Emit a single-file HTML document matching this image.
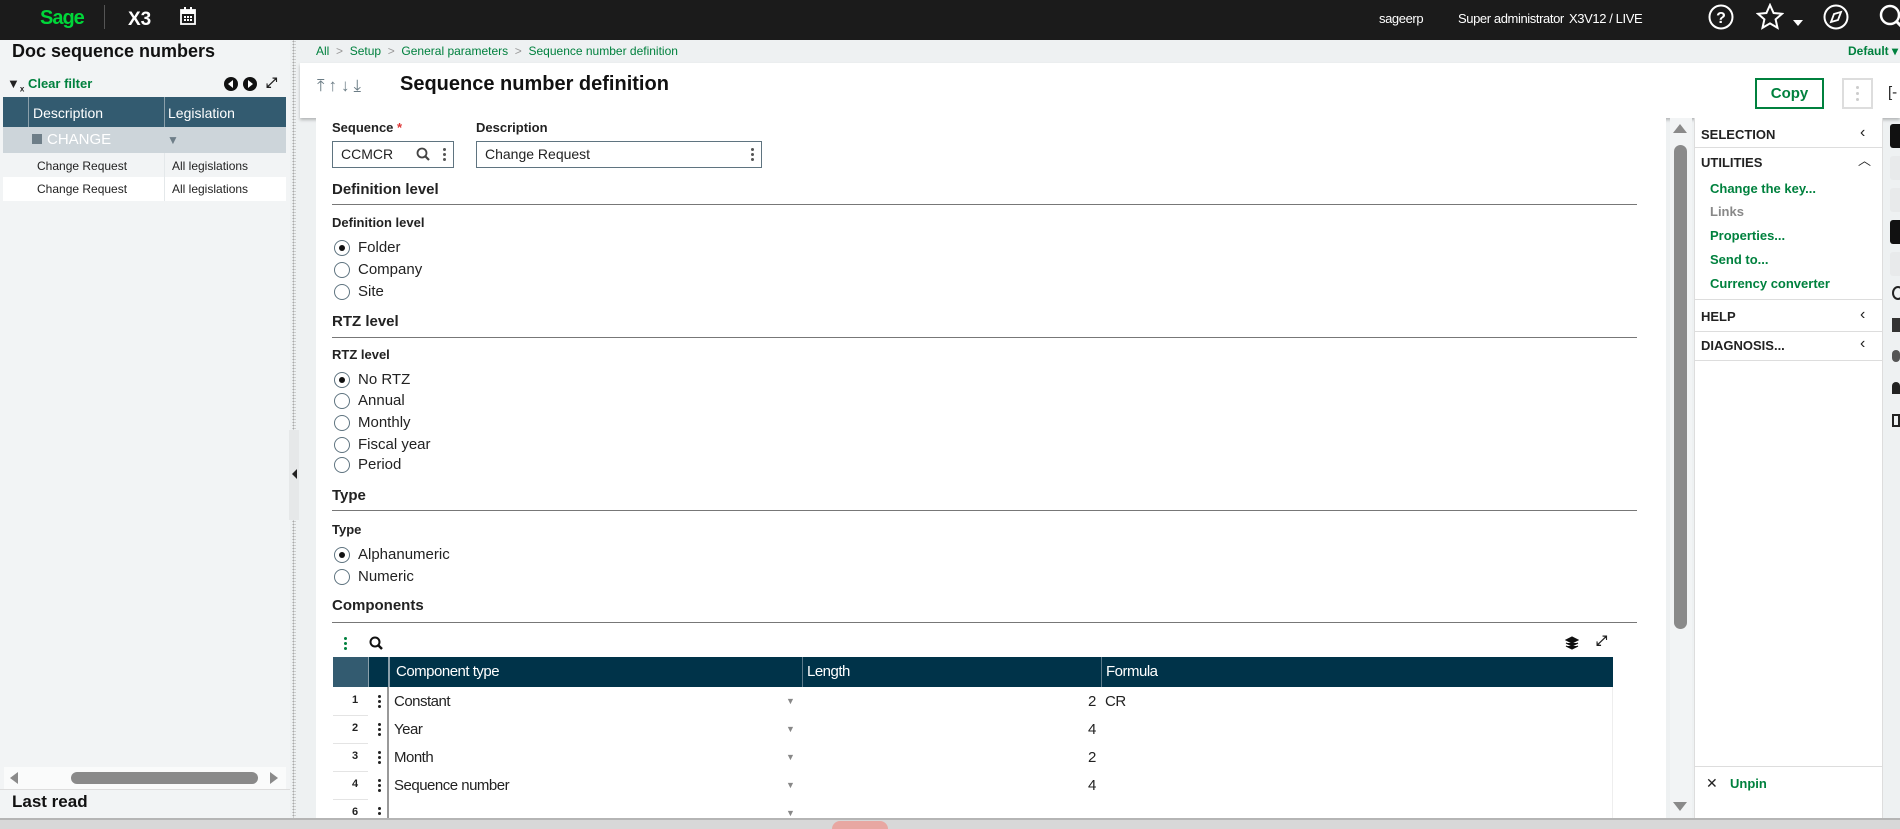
<!DOCTYPE html>
<html><head><meta charset="utf-8"><style>
*{box-sizing:border-box;margin:0;padding:0}
body{width:1900px;height:829px;overflow:hidden;background:#eef1f2;font-family:"Liberation Sans",sans-serif;color:#222;position:relative}
.a{position:absolute;white-space:nowrap}
.g{color:#00813e}
.top{left:0;top:0;width:1900px;height:40px;background:#1b1b1b}
.w{color:#fff;font-size:13px;letter-spacing:-0.4px}
.lbl{font-size:13px;font-weight:bold;color:#222}
.sec{font-size:15px;font-weight:bold;color:#222}
.line{height:1px;background:#777;left:332px;width:1305px}
.rad{width:16px;height:16px;border:1.5px solid #5f7480;border-radius:50%;background:#fff}
.rad.on::after{content:"";position:absolute;left:3.5px;top:3.5px;width:6px;height:6px;border-radius:50%;background:#111}
.rt{font-size:15px;color:#222}
.pi{font-size:13px;font-weight:bold}
.td{font-size:15px;color:#222;letter-spacing:-0.5px}
.vd{width:3px;height:3px;background:#222;border-radius:50%;position:absolute}
</style></head><body>
<!-- top bar -->
<div class="a top"></div>
<div class="a" style="left:40px;top:7px;font-size:20px;font-weight:bold;color:#00d639;letter-spacing:-1px">Sage</div>
<div class="a" style="left:104px;top:5px;width:1px;height:24px;background:#555"></div>
<div class="a" style="left:128px;top:9px;font-size:19px;font-weight:bold;color:#fff">X3</div>
<svg class="a" style="left:180px;top:7px" width="16" height="18" viewBox="0 0 16 18"><rect x="1" y="3" width="14" height="14" fill="none" stroke="#fff" stroke-width="1.8"/><rect x="1" y="3" width="14" height="4" fill="#fff"/><rect x="4" y="0" width="2" height="4" fill="#fff"/><rect x="10" y="0" width="2" height="4" fill="#fff"/><g fill="#fff"><rect x="4" y="9" width="2" height="2"/><rect x="7" y="9" width="2" height="2"/><rect x="10" y="9" width="2" height="2"/><rect x="4" y="12" width="2" height="2"/><rect x="7" y="12" width="2" height="2"/><rect x="10" y="12" width="2" height="2"/></g></svg>
<div class="a w" style="left:1379px;top:11px">sageerp</div>
<div class="a w" style="left:1458px;top:11px">Super administrator</div>
<div class="a w" style="left:1569px;top:11px">X3V12 / LIVE</div>
<svg class="a" style="left:1708px;top:4px" width="26" height="26" viewBox="0 0 26 26"><circle cx="13" cy="13" r="11.5" fill="none" stroke="#fff" stroke-width="2"/><text x="13" y="19" fill="#fff" font-size="16" font-weight="bold" text-anchor="middle" font-family="Liberation Sans">?</text></svg>
<svg class="a" style="left:1756px;top:3px" width="28" height="28" viewBox="0 0 28 28"><path d="M14 2l3.6 8 8.4.8-6.4 5.6 1.9 8.4L14 20.4 6.5 24.8l1.9-8.4L2 10.8l8.4-.8z" fill="none" stroke="#fff" stroke-width="2"/></svg>
<svg class="a" style="left:1793px;top:20px" width="10" height="8"><path d="M0 0h10L5 6z" fill="#fff"/></svg>
<svg class="a" style="left:1823px;top:4px" width="26" height="26" viewBox="0 0 26 26"><circle cx="13" cy="13" r="11.5" fill="none" stroke="#fff" stroke-width="2"/><path d="M18 8l-3 8-7 2 3-8z" fill="none" stroke="#fff" stroke-width="1.8"/></svg>
<svg class="a" style="left:1878px;top:3px" width="22" height="28"><circle cx="12" cy="12" r="9" fill="none" stroke="#fff" stroke-width="2.5"/><path d="M18 18l6 6" stroke="#fff" stroke-width="3"/></svg>

<!-- left panel -->
<div class="a" style="left:0;top:40px;width:290px;height:779px;background:#f2f4f5"></div>
<div class="a" style="left:12px;top:41px;font-size:18px;font-weight:bold;color:#111">Doc sequence numbers</div>
<div class="a" style="left:7px;top:76px;font-size:13px;font-weight:bold"><span style="color:#222">▼<sub style="font-size:8px">x</sub></span> <span class="g">Clear filter</span></div>
<div class="a" style="left:224px;top:77px;width:14px;height:14px;border-radius:50%;background:#111"></div>
<div class="a" style="left:228px;top:80px;border:4px solid transparent;border-right:5px solid #fff;border-left:0"></div>
<div class="a" style="left:243px;top:77px;width:14px;height:14px;border-radius:50%;background:#111"></div>
<div class="a" style="left:248px;top:80px;border:4px solid transparent;border-left:5px solid #fff;border-right:0"></div>
<div class="a" style="left:266px;top:74px;font-size:14px;font-weight:bold">⤢</div>
<div class="a" style="left:3px;top:97px;width:283px;height:30px;background:#335b70"></div>
<div class="a" style="left:28px;top:97px;width:1px;height:56px;background:#8ba0ab"></div>
<div class="a" style="left:164px;top:97px;width:1px;height:56px;background:#8ba0ab"></div>
<div class="a" style="left:33px;top:105px;color:#fff;font-size:14px">Description</div>
<div class="a" style="left:168px;top:105px;color:#fff;font-size:14px">Legislation</div>
<div class="a" style="left:3px;top:127px;width:283px;height:26px;background:#cdd5da"></div>
<div class="a" style="left:32px;top:134px;width:10px;height:10px;background:#6e7e88"></div>
<div class="a" style="left:47px;top:131px;color:#fff;font-size:15px">CHANGE</div>
<div class="a" style="left:167px;top:133px;color:#6e7e88;font-size:12px">▼</div>
<div class="a" style="left:3px;top:177px;width:283px;height:24px;background:#fff"></div>
<div class="a" style="left:164px;top:153px;width:1px;height:48px;background:#e4e8ea"></div>
<div class="a" style="left:37px;top:159px;font-size:12px">Change Request</div>
<div class="a" style="left:172px;top:159px;font-size:12px">All legislations</div>
<div class="a" style="left:37px;top:182px;font-size:12px">Change Request</div>
<div class="a" style="left:172px;top:182px;font-size:12px">All legislations</div>
<div class="a" style="left:4px;top:767px;width:282px;height:22px;background:#fafbfb"></div>
<div class="a" style="left:10px;top:772px;border:6px solid transparent;border-right:8px solid #8a8a8a;border-left:0"></div>
<div class="a" style="left:71px;top:772px;width:187px;height:12px;border-radius:6px;background:#8a8a8a"></div>
<div class="a" style="left:270px;top:772px;border:6px solid transparent;border-left:8px solid #8a8a8a;border-right:0"></div>
<div class="a" style="left:0;top:789px;width:290px;height:1px;background:#ddd"></div>
<div class="a" style="left:12px;top:792px;font-size:17px;font-weight:bold;color:#111">Last read</div>
<div class="a" style="left:292px;top:40px;width:4px;height:779px;background-image:radial-gradient(#aaa 40%,transparent 45%);background-size:3px 3px"></div>
<div class="a" style="left:289px;top:430px;width:10px;height:90px;background:#e6e8e9"></div>
<div class="a" style="left:292px;top:469px;border:5px solid transparent;border-right:5px solid #222;border-left:0"></div>

<!-- breadcrumb & header -->
<div class="a" style="left:316px;top:44px;font-size:12px;color:#00813e">All <span style="color:#999">&nbsp;&gt;&nbsp;</span> Setup <span style="color:#999">&nbsp;&gt;&nbsp;</span> General parameters <span style="color:#999">&nbsp;&gt;&nbsp;</span> Sequence number definition</div>
<div class="a g" style="left:1848px;top:44px;font-size:12px;font-weight:bold">Default ▾</div>
<div class="a" style="left:300px;top:63px;width:1600px;height:55px;background:#fff;box-shadow:0 2px 3px rgba(0,0,0,.25)"></div>
<div class="a" style="left:317px;top:76px;font-size:17px;color:#6b7c85;letter-spacing:4px">⤒↑↓⤓</div>
<div class="a" style="left:400px;top:73px;font-size:20px;font-weight:bold;color:#111">Sequence number definition</div>
<div class="a" style="left:1755px;top:78px;width:69px;height:31px;border:2px solid #00813e;color:#00813e;font-size:15px;font-weight:bold;text-align:center;line-height:27px">Copy</div>
<div class="a" style="left:1842px;top:78px;width:31px;height:31px;border:2px solid #ddd"></div>
<div class="vd" style="left:1856px;top:86px;background:#ccc"></div><div class="vd" style="left:1856px;top:92px;background:#ccc"></div><div class="vd" style="left:1856px;top:98px;background:#ccc"></div>
<div class="a" style="left:1888px;top:84px;font-size:15px">[-</div>

<!-- content -->
<div class="a" style="left:316px;top:118px;width:1350px;height:701px;background:#fff"></div>
<div class="a" style="left:1670px;top:118px;width:22px;height:701px;background:#f2f4f5"></div>
<div class="a" style="left:1673px;top:124px;border:7px solid transparent;border-bottom:9px solid #8a8a8a;border-top:0"></div>
<div class="a" style="left:1674px;top:145px;width:13px;height:484px;border-radius:7px;background:#8a8a8a"></div>
<div class="a" style="left:1673px;top:802px;border:7px solid transparent;border-top:9px solid #8a8a8a;border-bottom:0"></div>

<div class="a lbl" style="left:332px;top:120px">Sequence <span style="color:#d33">*</span></div>
<div class="a lbl" style="left:476px;top:120px">Description</div>
<div class="a" style="left:332px;top:141px;width:122px;height:27px;border:1px solid #5f7480"></div>
<div class="a rt" style="left:341px;top:146px;font-size:14px">CCMCR</div>
<svg class="a" style="left:416px;top:147px" width="15" height="15"><circle cx="6" cy="6" r="4.5" fill="none" stroke="#444" stroke-width="1.8"/><path d="M9 9l4 4" stroke="#444" stroke-width="2.2"/></svg>
<div class="vd" style="left:443px;top:148px;background:#555"></div><div class="vd" style="left:443px;top:153px;background:#555"></div><div class="vd" style="left:443px;top:158px;background:#555"></div>
<div class="a" style="left:476px;top:141px;width:286px;height:27px;border:1px solid #5f7480"></div>
<div class="a rt" style="left:485px;top:146px;font-size:14px">Change Request</div>
<div class="vd" style="left:751px;top:148px;background:#555"></div><div class="vd" style="left:751px;top:153px;background:#555"></div><div class="vd" style="left:751px;top:158px;background:#555"></div>

<div class="a sec" style="left:332px;top:181px">Definition level</div>
<div class="a line" style="top:204px"></div>
<div class="a lbl" style="left:332px;top:215px">Definition level</div>
<div class="a rad on" style="left:334px;top:240px"></div><div class="a rt" style="left:358px;top:239px">Folder</div>
<div class="a rad" style="left:334px;top:262px"></div><div class="a rt" style="left:358px;top:261px">Company</div>
<div class="a rad" style="left:334px;top:284px"></div><div class="a rt" style="left:358px;top:283px">Site</div>

<div class="a sec" style="left:332px;top:313px">RTZ level</div>
<div class="a line" style="top:337px"></div>
<div class="a lbl" style="left:332px;top:347px">RTZ level</div>
<div class="a rad on" style="left:334px;top:372px"></div><div class="a rt" style="left:358px;top:371px">No RTZ</div>
<div class="a rad" style="left:334px;top:393px"></div><div class="a rt" style="left:358px;top:392px">Annual</div>
<div class="a rad" style="left:334px;top:415px"></div><div class="a rt" style="left:358px;top:414px">Monthly</div>
<div class="a rad" style="left:334px;top:437px"></div><div class="a rt" style="left:358px;top:436px">Fiscal year</div>
<div class="a rad" style="left:334px;top:457px"></div><div class="a rt" style="left:358px;top:456px">Period</div>

<div class="a sec" style="left:332px;top:487px">Type</div>
<div class="a line" style="top:510px"></div>
<div class="a lbl" style="left:332px;top:522px">Type</div>
<div class="a rad on" style="left:334px;top:547px"></div><div class="a rt" style="left:358px;top:546px">Alphanumeric</div>
<div class="a rad" style="left:334px;top:569px"></div><div class="a rt" style="left:358px;top:568px">Numeric</div>

<div class="a sec" style="left:332px;top:597px">Components</div>
<div class="a line" style="top:622px"></div>
<div class="vd" style="left:344px;top:637px;background:#00813e"></div><div class="vd" style="left:344px;top:642px;background:#00813e"></div><div class="vd" style="left:344px;top:647px;background:#00813e"></div>
<svg class="a" style="left:369px;top:636px" width="15" height="15"><circle cx="6" cy="6" r="4.5" fill="none" stroke="#111" stroke-width="2"/><path d="M9 9l4 4" stroke="#111" stroke-width="2.5"/></svg>
<svg class="a" style="left:1565px;top:636px" width="14" height="14"><path d="M7 1l6 3-6 3-6-3z M1 7l6 3 6-3 M1 10l6 3 6-3" fill="#111" stroke="#111" stroke-width="1.2"/></svg>
<div class="a" style="left:1596px;top:632px;font-size:14px;font-weight:bold">⤢</div>

<div class="a" style="left:333px;top:657px;width:35px;height:30px;background:#335b70"></div>
<div class="a" style="left:368px;top:657px;width:20px;height:30px;background:#003349;border-left:1px solid #8ba0ab"></div>
<div class="a" style="left:388px;top:657px;width:1225px;height:30px;background:#003349;border-left:2px solid #8ba0ab"></div>
<div class="a" style="left:802px;top:657px;width:1px;height:30px;background:#5c7a8a"></div>
<div class="a" style="left:1101px;top:657px;width:1px;height:30px;background:#5c7a8a"></div>
<div class="a td" style="left:396px;top:663px;color:#fff">Component type</div>
<div class="a td" style="left:807px;top:663px;color:#fff">Length</div>
<div class="a td" style="left:1106px;top:663px;color:#fff">Formula</div>
<div class="a" style="left:387px;top:687px;width:2px;height:132px;background:#999"></div>
<div class="a" style="left:1612px;top:687px;width:1px;height:132px;background:#eee"></div>

<div class="a" style="left:333px;top:715px;width:35px;height:1px;background:#e4e4e4"></div>
<div class="a" style="left:333px;top:743px;width:35px;height:1px;background:#e4e4e4"></div>
<div class="a" style="left:333px;top:771px;width:35px;height:1px;background:#e4e4e4"></div>
<div class="a" style="left:333px;top:799px;width:35px;height:1px;background:#e4e4e4"></div>

<div class="a" style="left:352px;top:694px;font-size:11px;font-weight:bold">1</div>
<div class="a" style="left:352px;top:722px;font-size:11px;font-weight:bold">2</div>
<div class="a" style="left:352px;top:750px;font-size:11px;font-weight:bold">3</div>
<div class="a" style="left:352px;top:778px;font-size:11px;font-weight:bold">4</div>
<div class="a" style="left:352px;top:806px;font-size:11px;font-weight:bold">6</div>
<div class="vd" style="left:378px;top:695px"></div><div class="vd" style="left:378px;top:700px"></div><div class="vd" style="left:378px;top:705px"></div>
<div class="vd" style="left:378px;top:723px"></div><div class="vd" style="left:378px;top:728px"></div><div class="vd" style="left:378px;top:733px"></div>
<div class="vd" style="left:378px;top:751px"></div><div class="vd" style="left:378px;top:756px"></div><div class="vd" style="left:378px;top:761px"></div>
<div class="vd" style="left:378px;top:779px"></div><div class="vd" style="left:378px;top:784px"></div><div class="vd" style="left:378px;top:789px"></div>
<div class="vd" style="left:378px;top:807px"></div><div class="vd" style="left:378px;top:812px"></div>

<div class="a td" style="left:394px;top:693px">Constant</div>
<div class="a td" style="left:394px;top:721px">Year</div>
<div class="a td" style="left:394px;top:749px">Month</div>
<div class="a td" style="left:394px;top:777px">Sequence number</div>
<div class="a" style="left:786px;top:696px;font-size:9px;color:#888">▼</div>
<div class="a" style="left:786px;top:724px;font-size:9px;color:#888">▼</div>
<div class="a" style="left:786px;top:752px;font-size:9px;color:#888">▼</div>
<div class="a" style="left:786px;top:780px;font-size:9px;color:#888">▼</div>
<div class="a" style="left:786px;top:808px;font-size:9px;color:#888">▼</div>
<div class="a td" style="left:1088px;top:693px">2</div>
<div class="a td" style="left:1088px;top:721px">4</div>
<div class="a td" style="left:1088px;top:749px">2</div>
<div class="a td" style="left:1088px;top:777px">4</div>
<div class="a td" style="left:1105px;top:693px">CR</div>

<!-- right panel -->
<div class="a" style="left:1694px;top:118px;width:189px;height:701px;background:#fff;border-left:1px solid #ddd;border-right:1px solid #ddd"></div>
<div class="a" style="left:1694px;top:147px;width:189px;height:1px;background:#ddd"></div>
<div class="a" style="left:1694px;top:299px;width:189px;height:1px;background:#ddd"></div>
<div class="a" style="left:1694px;top:331px;width:189px;height:1px;background:#ddd"></div>
<div class="a" style="left:1694px;top:360px;width:189px;height:1px;background:#ddd"></div>
<div class="a" style="left:1694px;top:766px;width:189px;height:1px;background:#ddd"></div>
<div class="a pi" style="left:1701px;top:127px;color:#222">SELECTION</div><div class="a" style="left:1860px;top:124px;font-size:16px">‹</div>
<div class="a pi" style="left:1701px;top:155px;color:#222">UTILITIES</div><div class="a" style="left:1858px;top:150px;font-size:13px">︿</div>
<div class="a pi g" style="left:1710px;top:181px">Change the key...</div>
<div class="a pi" style="left:1710px;top:204px;color:#888">Links</div>
<div class="a pi g" style="left:1710px;top:228px">Properties...</div>
<div class="a pi g" style="left:1710px;top:252px">Send to...</div>
<div class="a pi g" style="left:1710px;top:276px">Currency converter</div>
<div class="a pi" style="left:1701px;top:309px;color:#222">HELP</div><div class="a" style="left:1860px;top:306px;font-size:16px">‹</div>
<div class="a pi" style="left:1701px;top:338px;color:#222">DIAGNOSIS...</div><div class="a" style="left:1860px;top:335px;font-size:16px">‹</div>
<div class="a" style="left:1706px;top:775px;font-size:14px">✕</div>
<div class="a pi g" style="left:1730px;top:776px">Unpin</div>

<!-- icon strip -->
<div class="a" style="left:1890px;top:124px;width:10px;height:24px;background:#111;border-radius:3px 0 0 3px"></div>
<div class="a" style="left:1890px;top:156px;width:10px;height:24px;background:#e8eaeb;border-radius:3px 0 0 3px"></div>
<div class="a" style="left:1890px;top:188px;width:10px;height:24px;background:#e8eaeb;border-radius:3px 0 0 3px"></div>
<div class="a" style="left:1890px;top:220px;width:10px;height:24px;background:#111;border-radius:3px 0 0 3px"></div>
<div class="a" style="left:1890px;top:252px;width:10px;height:24px;background:#e8eaeb;border-radius:3px 0 0 3px"></div>
<div class="a" style="left:1892px;top:286px;width:12px;height:14px;border:2px solid #222;border-radius:50%"></div>
<div class="a" style="left:1892px;top:318px;width:8px;height:14px;background:#333"></div>
<div class="a" style="left:1892px;top:350px;width:8px;height:12px;background:#555;border-radius:4px"></div>
<div class="a" style="left:1892px;top:382px;width:8px;height:12px;background:#222;border-radius:4px 4px 0 0"></div>
<div class="a" style="left:1892px;top:414px;width:8px;height:13px;border:2px solid #222"></div>

<!-- bottom bar -->
<div class="a" style="left:0;top:818px;width:1900px;height:11px;background:#d8d8d8;border-top:2px solid #b5b5b5"></div>
<div class="a" style="left:832px;top:821px;width:56px;height:8px;background:#e8a7a2;border-radius:8px 8px 0 0"></div>
</body></html>
